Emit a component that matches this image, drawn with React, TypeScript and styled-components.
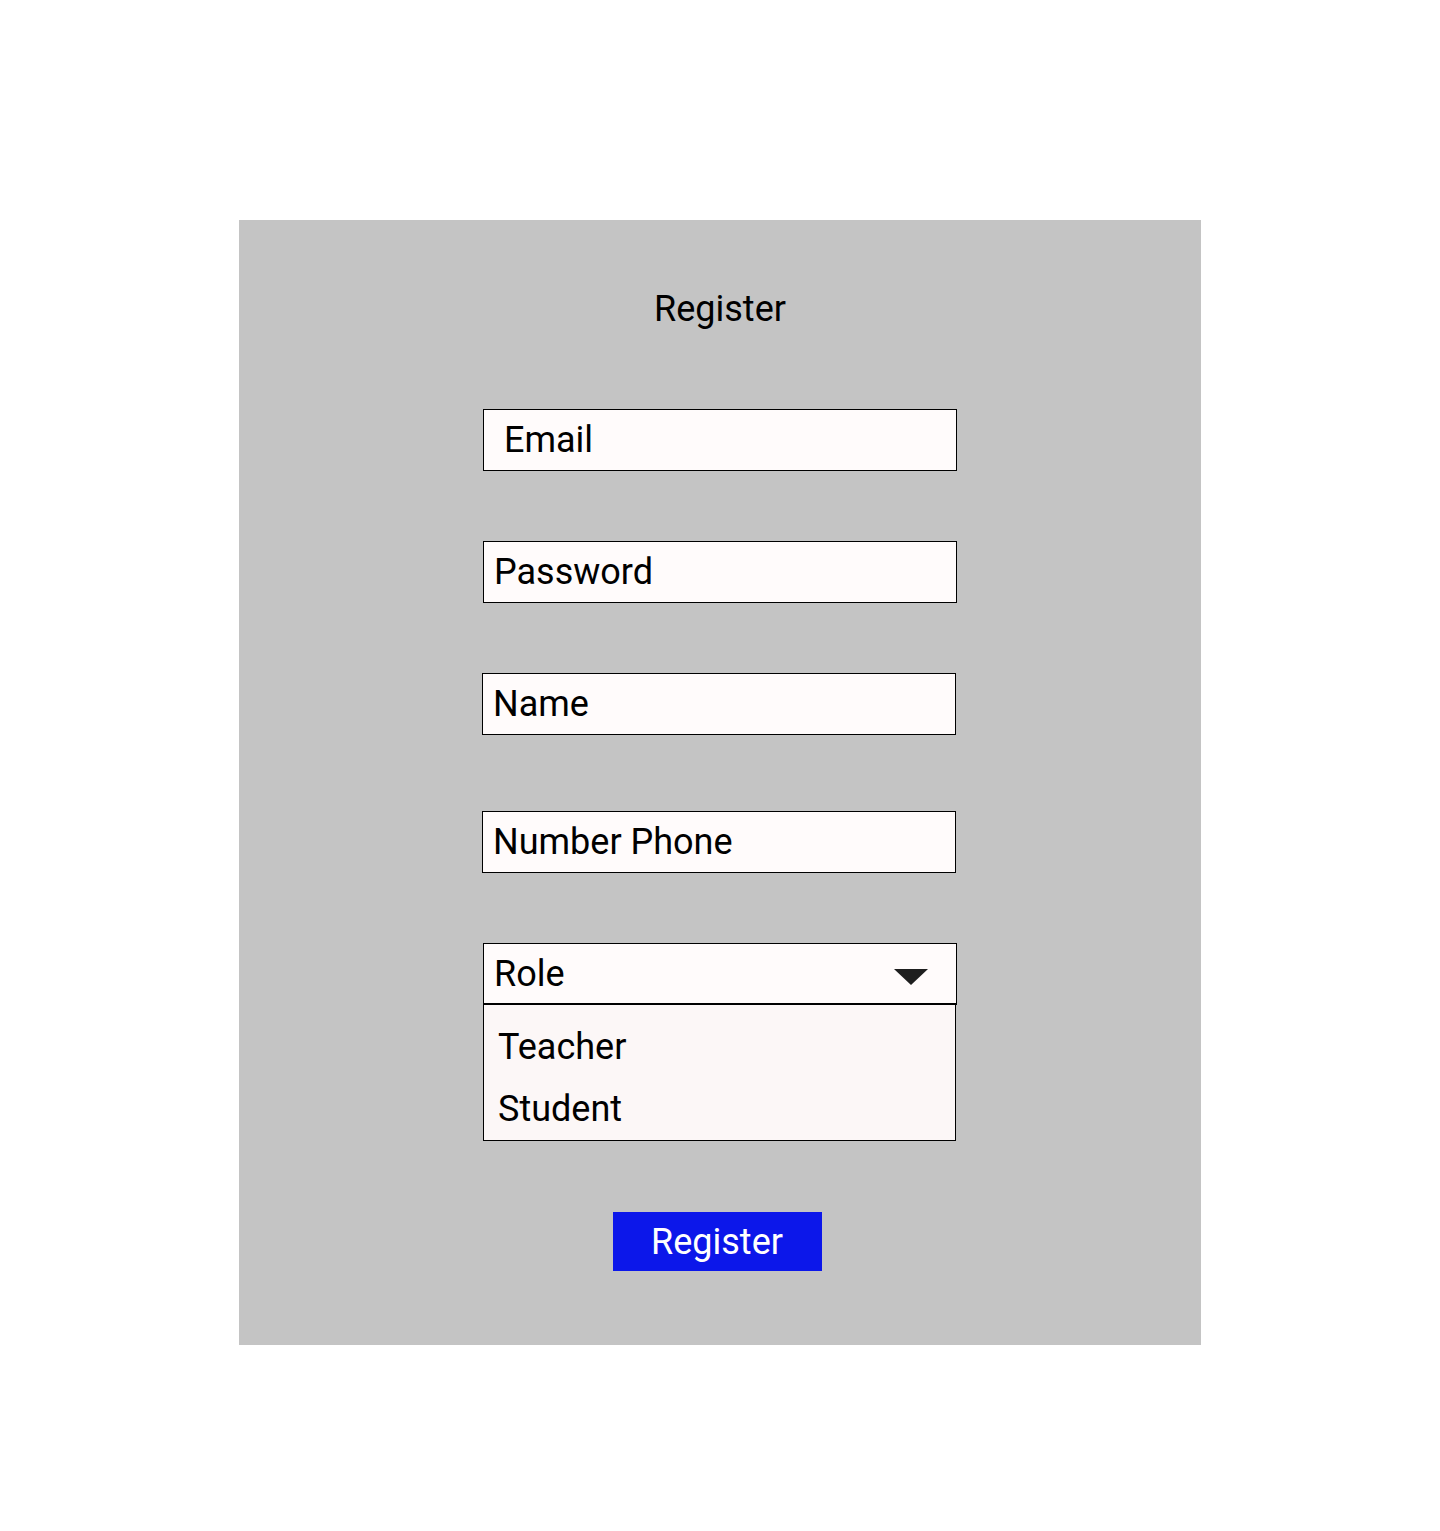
import React from "react";
import styled, { createGlobalStyle } from "styled-components";

const Global = createGlobalStyle`
  html, body { margin: 0; padding: 0; background: #ffffff; }
  body { font-family: Roboto, "Liberation Sans", Arial, sans-serif; }
  * { box-sizing: border-box; }
`;

const Page = styled.div`
  width: 1440px;
  min-height: 1531px;
  padding-top: 220px;
  display: flex;
  justify-content: center;
  align-items: flex-start;
`;

const Panel = styled.form`
  width: 962px;
  height: 1125px;
  background: #c4c4c4;
  display: flex;
  flex-direction: column;
  align-items: center;
  padding-top: 68px;
`;

const Title = styled.h1`
  margin: 0 0 79px;
  font-size: 36px;
  line-height: 42px;
  font-weight: 400;
  color: #000;
`;

const Field = styled.div<{ $indent?: number; $gap?: number; $shift?: number }>`
  width: 474px;
  height: 62px;
  border: 1px solid #000;
  background: #fffbfb;
  display: flex;
  align-items: center;
  padding-left: ${(p) => p.$indent ?? 10}px;
  margin-bottom: ${(p) => p.$gap ?? 70}px;
  margin-left: ${(p) => p.$shift ?? 0}px;
  font-size: 36px;
  line-height: 42px;
  color: #000;
`;

const RoleGroup = styled.div`
  width: 474px;
  display: flex;
  flex-direction: column;
  margin-bottom: 71px;
`;

const Select = styled.div`
  height: 62px;
  border: 1px solid #000;
  border-bottom-width: 2px;
  background: #fffbfb;
  display: flex;
  align-items: center;
  justify-content: space-between;
  padding: 0 28px 0 10px;
  font-size: 36px;
  line-height: 42px;
  color: #000;
`;

const Caret = styled.svg`
  display: block;
  margin-top: 6px;
`;

const Options = styled.ul`
  list-style: none;
  margin: 0 1px 0 0;
  padding: 11px 0 0 14px;
  border: 1px solid #000;
  border-top: none;
  background: #fcf7f7;
`;

const Option = styled.li`
  font-size: 36px;
  line-height: 63px;
  height: 62px;
  color: #000;
`;

const Button = styled.button`
  width: 209px;
  height: 59px;
  border: none;
  background: #0c17ea;
  color: #fff;
  font-family: inherit;
  font-size: 36px;
  line-height: 42px;
  padding: 0;
  margin-left: -6px;
`;

export default function App() {
  return (
    <>
      <Global />
      <Page>
        <Panel onSubmit={(e) => e.preventDefault()}>
          <Title>Register</Title>
          <Field $indent={20}>Email</Field>
          <Field>Password</Field>
          <Field $gap={76} $shift={-2}>Name</Field>
          <Field $shift={-2}>Number Phone</Field>
          <RoleGroup>
            <Select>
              <span>Role</span>
              <Caret width="34" height="16" viewBox="0 0 34 16">
                <polygon points="0,0 34,0 17,16" fill="#1e1e1e" />
              </Caret>
            </Select>
            <Options>
              <Option>Teacher</Option>
              <Option>Student</Option>
            </Options>
          </RoleGroup>
          <Button type="submit">Register</Button>
        </Panel>
      </Page>
    </>
  );
}
